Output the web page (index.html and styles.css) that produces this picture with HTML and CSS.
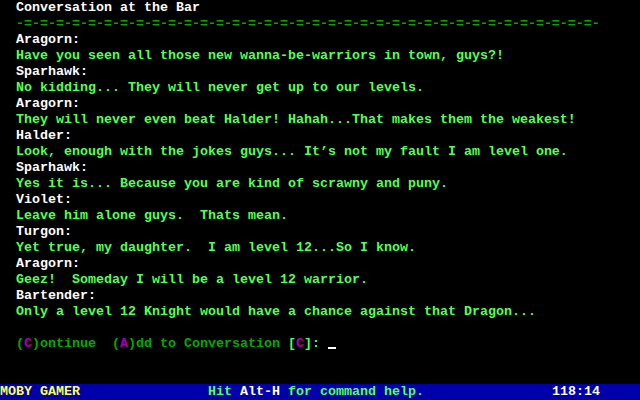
FILE: index.html
```html
<!DOCTYPE html>
<html>
<head>
<meta charset="utf-8">
<link rel="stylesheet" href="styles.css">
</head>
<body>
<div class="screen">
<div class="row w">  Conversation at the Bar</div>
<div class="row dg">  -=-=-=-=-=-=-=-=-=-=-=-=-=-=-=-=-=-=-=-=-=-=-=-=-=-=-=-=-=-=-=-=-=-=-=-=-</div>
<div class="row w">  Aragorn:</div>
<div class="row g">  Have you seen all those new wanna-be-warriors in town, guys?!</div>
<div class="row w">  Sparhawk:</div>
<div class="row g">  No kidding... They will never get up to our levels.</div>
<div class="row w">  Aragorn:</div>
<div class="row g">  They will never even beat Halder! Hahah...That makes them the weakest!</div>
<div class="row w">  Halder:</div>
<div class="row g">  Look, enough with the jokes guys... It’s not my fault I am level one.</div>
<div class="row w">  Sparhawk:</div>
<div class="row g">  Yes it is... Because you are kind of scrawny and puny.</div>
<div class="row w">  Violet:</div>
<div class="row g">  Leave him alone guys.  Thats mean.</div>
<div class="row w">  Turgon:</div>
<div class="row g">  Yet true, my daughter.  I am level 12...So I know.</div>
<div class="row w">  Aragorn:</div>
<div class="row g">  Geez!  Someday I will be a level 12 warrior.</div>
<div class="row w">  Bartender:</div>
<div class="row g">  Only a level 12 Knight would have a chance against that Dragon...</div>
<div class="row"> </div>
<div class="row dg">  (<span class="m">C</span>)ontinue  (<span class="m">A</span>)dd to Conversation <span class="g">[</span><span class="m">C</span><span class="g">]:</span> <span class="cursor"></span></div>
<div class="row"> </div>
<div class="row"> </div>
<div class="row status"><span class="y">MOBY GAMER</span>                <span class="g">Hit </span><span class="w">Alt-H</span><span class="g"> for command help.</span>                <span class="w">118:14</span></div>
</div>
</body>
</html>
```
FILE: styles.css
```css
html, body {
  margin: 0;
  padding: 0;
  background: #000;
}
.screen {
  width: 640px;
  height: 400px;
  background: #000;
  font-family: "Liberation Mono", "DejaVu Sans Mono", monospace;
  font-size: 13.3333px;
  font-weight: bold;
  overflow: hidden;
}
.row {
  height: 16px;
  line-height: 16px;
  white-space: pre;
}
.w { color: #ffffff; }
.g { color: #55ff55; }
.dg { color: #00aa00; }
.m { color: #aa00aa; }
.y { color: #ffff55; }
.status {
  background: #0000aa;
}
.cursor {
  display: inline-block;
  width: 8px;
  height: 2px;
  background: #ffffff;
  vertical-align: -2px;
}
```
